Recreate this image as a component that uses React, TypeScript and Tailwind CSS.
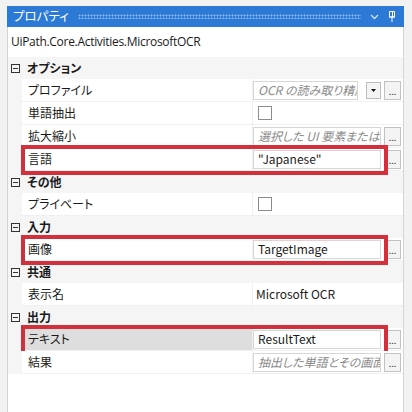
import type { ReactNode } from 'react'

function Minus() {
  return (
    <div className="w-[9px] h-[9px] border border-[#333] flex items-center justify-center">
      <div className="w-[5px] h-px bg-[#333]" />
    </div>
  )
}

function Category({ label }: { label: string }) {
  return (
    <div className="flex h-[22px] items-center bg-[#f5f5f5]">
      <div className="w-[14px] shrink-0 flex justify-center pl-[1px]">
        <Minus />
      </div>
      <span className="pl-[5px] font-semibold text-[#1a1a1a]">{label}</span>
    </div>
  )
}

function Dots() {
  return (
    <div className="w-[17px] h-[19px] shrink-0 border border-[#c2c2c2] bg-[#f4f4f4] flex items-end justify-center pb-[3px] text-[9px] leading-none text-[#333]">
      ...
    </div>
  )
}

function Box({ children, italic }: { children: ReactNode; italic?: boolean }) {
  return (
    <div
      className={`flex-1 min-w-0 h-[19px] border border-[#d6d6d6] bg-white pl-[4px] flex items-center overflow-hidden whitespace-nowrap ${
        italic ? 'italic text-[#8a8a8a]' : 'text-[#1a1a1a]'
      }`}
    >
      {children}
    </div>
  )
}

interface RowProps {
  name: string
  children?: ReactNode
  highlight?: boolean
  selected?: boolean
}

function Row({ name, children, highlight, selected }: RowProps) {
  return (
    <div className="relative flex h-[23px]">
      <div className="w-[14px] shrink-0 bg-[#f5f5f5]" />
      <div
        className={`w-[230px] shrink-0 flex items-center pl-[6px] border-b border-[#f0f0f0] text-[#1a1a1a] ${
          selected ? 'bg-[#dedede]' : 'bg-white'
        }`}
      >
        {name}
      </div>
      <div className="flex-1 min-w-0 flex items-center gap-[3px] pr-[2px] border-l border-b border-[#f0f0f0] bg-white">
        {children}
      </div>
      {highlight && (
        <div className="absolute left-[13px] w-[367px] -top-[3px] -bottom-[4px] border-[4px] border-[#d3303b]" />
      )}
    </div>
  )
}

export default function App() {
  return (
    <div className="w-[412px] h-[412px] bg-[#f2f2f2] pt-[6px] pl-[7px] pr-[8px] overflow-hidden font-['Noto_Sans_CJK_JP',sans-serif] text-[12px] [font-feature-settings:'palt']">
      <div className="flex h-[21px] items-center bg-[#2c7ad6] pl-[6px] pr-[8px]">
        <span className="text-white text-[12.5px]">プロパティ</span>
        <div className="flex-1 mx-[9px] h-[5px] bg-[radial-gradient(circle,#8dbaf0_0.9px,transparent_1.1px)] bg-[length:3px_3px]" />
        <svg width="9" height="6" viewBox="0 0 9 6" className="mr-[9px]">
          <path d="M1 1 L4.5 4.5 L8 1" fill="none" stroke="#cfe2fa" strokeWidth="1.3" />
        </svg>
        <svg width="8" height="11" viewBox="0 0 8 11">
          <path d="M1.5 0.5 H6.5 V6 H1.5 Z M1 6 H7 M4 6 V11 M4.5 1 V6" fill="none" stroke="#ffffff" strokeWidth="1" />
        </svg>
      </div>
      <div className="h-[391px] bg-white border-l border-r border-[#d4d4d4] flex flex-col">
        <div className="h-[30px] flex items-center pl-[3px] text-[#1a1a1a] text-[12px] font-['Open_Sans','Noto_Sans_CJK_JP',sans-serif] tracking-[-0.3px]">
          UiPath.Core.Activities.MicrosoftOCR
        </div>
        <Category label="オプション" />
        <Row name="プロファイル">
          <Box italic>OCR の読み取り精度</Box>
          <div className="w-[15px] h-[17px] ml-[5px] shrink-0 border border-[#bdbdbd] bg-[#f4f4f4] flex items-center justify-center">
            <svg width="5" height="3" viewBox="0 0 5 3">
              <path d="M0 0 H5 L2.5 3 Z" fill="#111" />
            </svg>
          </div>
          <Dots />
        </Row>
        <Row name="単語抽出">
          <div className="ml-[5px] w-[14px] h-[14px] border border-[#8c8c8c] bg-white" />
        </Row>
        <Row name="拡大縮小">
          <Box italic>選択した UI 要素または画像</Box>
          <Dots />
        </Row>
        <Row name="言語" highlight>
          <Box>"Japanese"</Box>
          <Dots />
        </Row>
        <Category label="その他" />
        <Row name="プライベート">
          <div className="ml-[5px] w-[14px] h-[14px] border border-[#8c8c8c] bg-white" />
        </Row>
        <Category label="入力" />
        <Row name="画像" highlight>
          <Box>TargetImage</Box>
          <Dots />
        </Row>
        <Category label="共通" />
        <Row name="表示名">
          <span className="pl-[3px] text-[#1a1a1a]">Microsoft OCR</span>
        </Row>
        <Category label="出力" />
        <Row name="テキスト" highlight selected>
          <Box>ResultText</Box>
          <Dots />
        </Row>
        <Row name="結果">
          <Box italic>抽出した単語とその画面上の位置</Box>
          <Dots />
        </Row>
      </div>
    </div>
  )
}
